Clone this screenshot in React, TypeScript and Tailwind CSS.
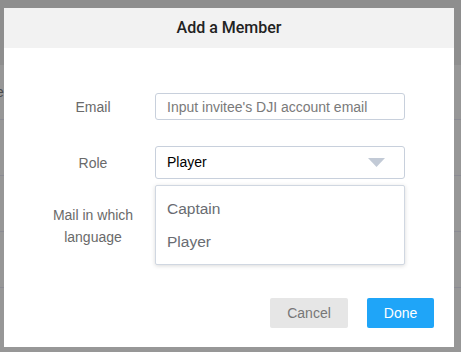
import React from "react";

const roles = ["Captain", "Player"];

function Background() {
  return (
    <div className="flex flex-col w-full h-full">
      <div className="h-[65px] bg-[#8e8e8e]" />
      <div className="h-[55px] bg-[#979797] border-b border-[#8b8b93] flex items-center">
        <span className="-ml-[4px] text-[14px] text-[#4a4a4a]">e</span>
      </div>
      <div className="h-[56px] bg-[#979797] border-b border-[#8b8b93]" />
      <div className="h-[56px] bg-[#979797] border-b border-[#8b8b93]" />
      <div className="h-[56px] bg-[#979797] border-b border-[#8b8b93]" />
      <div className="flex-1 bg-[#979797]" />
    </div>
  );
}

function Row({ label, children }: { label: React.ReactNode; children: React.ReactNode }) {
  return (
    <div className="flex items-center">
      <div className="w-[106px] text-center text-[14px] leading-[22px] text-[#6a6a6a]">{label}</div>
      <div className="ml-[9px] w-[250px] relative">{children}</div>
    </div>
  );
}

function AddMemberModal() {
  return (
    <div className="absolute left-[4px] top-[8px] w-[450px] h-[339px] bg-white flex flex-col">
      <div className="h-[40px] bg-[#f2f2f2] flex items-center justify-center text-[16px] font-medium text-[#222] font-['Roboto',sans-serif]">
        Add a Member
      </div>

      <div className="pl-[36px] pt-[45px] flex flex-col">
        <Row label="Email">
          <input
            type="text"
            placeholder="Input invitee's DJI account email"
            className="w-full h-[27px] border border-[#c8d0dc] rounded-[3px] px-[11px] text-[14px] text-[#333] placeholder:text-[#7a7a7a] outline-none"
          />
        </Row>

        <div className="mt-[26px]">
          <Row label="Role">
            <div className="h-[33px] border border-[#c8d0dc] rounded-[3px] px-[11px] flex items-center justify-between text-[14px] text-black">
              <span>Player</span>
              <svg width="17" height="9" viewBox="0 0 17 9" className="mr-[8px]">
                <path d="M0 0 H17 L8.5 9 Z" fill="#c2cad6" />
              </svg>
            </div>
            <div className="absolute left-0 top-[39px] w-full z-10 bg-white border border-[#d0d7e1] rounded-[2px] shadow-[0_1px_4px_rgba(0,0,0,0.15)] pt-[6px] pb-[6px]">
              {roles.map((r) => (
                <div key={r} className="h-[33px] px-[11px] flex items-center text-[15.5px] text-[#696c72]">
                  {r}
                </div>
              ))}
            </div>
          </Row>
        </div>

        <div className="mt-[25px]">
          <Row
            label={
              <>
                Mail in which
                <br />
                language
              </>
            }
          >
            <div className="h-[33px] border border-[#c8d0dc] rounded-[3px]" />
          </Row>
        </div>
      </div>

      <div className="mt-auto pb-[19px] pr-[20px] flex justify-end gap-[19px]">
        <button className="w-[78px] h-[30px] rounded-[2px] bg-[#e6e6e6] text-[14px] text-[#777]">Cancel</button>
        <button className="w-[67px] h-[30px] rounded-[2px] bg-[#1fa5f8] text-[14px] text-white">Done</button>
      </div>
    </div>
  );
}

export default function App() {
  return (
    <div className="relative w-[461px] h-[352px] overflow-hidden font-['Liberation_Sans',Arial,sans-serif]">
      <Background />
      <AddMemberModal />
    </div>
  );
}
